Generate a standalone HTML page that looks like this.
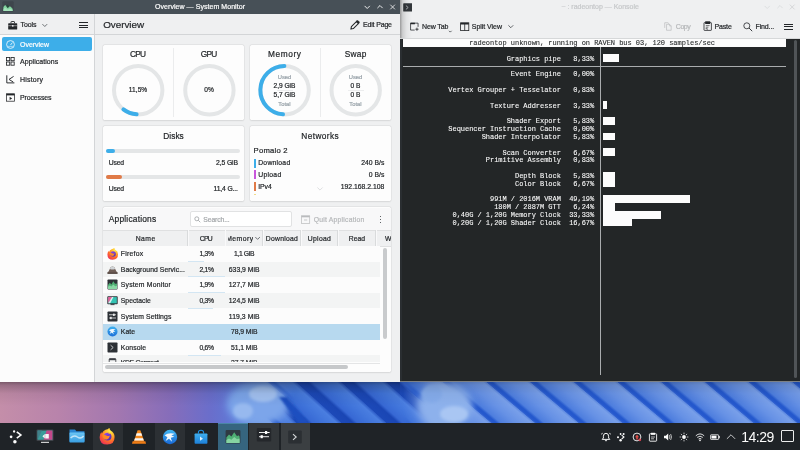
<!DOCTYPE html>
<html><head><meta charset="utf-8"><title>desktop</title>
<style>
html,body{margin:0;padding:0}
body{width:800px;height:450px;overflow:hidden;position:relative;background:#3f66c9;font-family:"Liberation Sans",sans-serif;}
.a{position:absolute;display:block}
.t{position:absolute;white-space:pre;font-family:"Liberation Sans",sans-serif;-webkit-text-stroke:0.2px}
.m{position:absolute;white-space:pre;font-family:"Liberation Mono",monospace;-webkit-text-stroke:0.08px}
#root{position:absolute;left:0;top:0;width:800px;height:450px;overflow:hidden;will-change:transform}
</style></head><body><div id="root">
<svg class="a" style="left:0;top:375px" width="800" height="55" viewBox="0 375 800 55"><defs>
<linearGradient id="wpL" x1="0" x2="270" y1="0" y2="0" gradientUnits="userSpaceOnUse">
 <stop offset="0" stop-color="#c48ea9"/><stop offset="0.22" stop-color="#b883ab"/>
 <stop offset="0.44" stop-color="#a277b0"/><stop offset="0.63" stop-color="#866dba"/>
 <stop offset="0.78" stop-color="#6a6ecb"/><stop offset="0.88" stop-color="#5d7ad8"/><stop offset="1" stop-color="#5d80dc" stop-opacity="0"/>
</linearGradient>
<linearGradient id="wpS" x1="0" x2="1" y1="0" y2="0">
 <stop offset="0" stop-color="#3565d2"/><stop offset="0.06" stop-color="#2458cd"/><stop offset="0.13" stop-color="#2458cd"/>
 <stop offset="0.22" stop-color="#4e7ede"/><stop offset="0.55" stop-color="#6691e5"/>
 <stop offset="0.92" stop-color="#789fe9"/><stop offset="1" stop-color="#5c88e0"/>
</linearGradient>
<pattern id="stripes" width="43.7" height="60" patternUnits="userSpaceOnUse" patternTransform="translate(530,382) skewX(49.9)">
 <rect x="0" y="0" width="43.7" height="60" fill="url(#wpS)"/>
</pattern>
<linearGradient id="dk" x1="270" x2="430" y1="0" y2="0" gradientUnits="userSpaceOnUse">
 <stop offset="0" stop-color="#0c36b4" stop-opacity="0"/><stop offset="0.2" stop-color="#0c36b4" stop-opacity="0.42"/>
 <stop offset="0.8" stop-color="#0c36b4" stop-opacity="0.42"/><stop offset="1" stop-color="#0c36b4" stop-opacity="0"/>
</linearGradient>
<linearGradient id="shade" x1="0" x2="0" y1="381" y2="423" gradientUnits="userSpaceOnUse">
 <stop offset="0" stop-color="#000" stop-opacity="0.42"/><stop offset="0.1" stop-color="#000" stop-opacity="0.22"/><stop offset="0.3" stop-color="#000" stop-opacity="0.06"/><stop offset="0.6" stop-color="#000" stop-opacity="0"/>
</linearGradient>
<linearGradient id="wpS2" x1="0" x2="1" y1="0" y2="0">
 <stop offset="0" stop-color="#1c49b8"/><stop offset="0.26" stop-color="#1a46b4"/>
 <stop offset="0.36" stop-color="#3768d4"/><stop offset="0.6" stop-color="#3f73da"/>
 <stop offset="0.9" stop-color="#4a7ee0"/><stop offset="1" stop-color="#2c5ac6"/>
</linearGradient>
<pattern id="stripes2" width="45" height="60" patternUnits="userSpaceOnUse" patternTransform="translate(296,382) skewX(48)">
 <rect x="0" y="0" width="45" height="60" fill="url(#wpS2)"/>
</pattern>
<linearGradient id="mkg" x1="280" x2="430" y1="0" y2="0" gradientUnits="userSpaceOnUse">
 <stop offset="0" stop-color="#000"/><stop offset="0.1" stop-color="#fff"/><stop offset="0.82" stop-color="#fff"/><stop offset="1" stop-color="#000"/>
</linearGradient>
<mask id="mk" maskUnits="userSpaceOnUse" x="280" y="375" width="150" height="55"><rect x="280" y="375" width="150" height="55" fill="url(#mkg)"/></mask>
<filter id="blur1" x="-50%" y="-50%" width="200%" height="200%"><feGaussianBlur stdDeviation="0.9"/></filter>
<filter id="blur4" x="-50%" y="-50%" width="200%" height="200%"><feGaussianBlur stdDeviation="3.5"/></filter>
<filter id="blur2" x="-50%" y="-50%" width="200%" height="200%"><feGaussianBlur stdDeviation="1.8"/></filter>
</defs><rect x="0" y="375" width="800" height="55" fill="url(#stripes)"/><rect x="280" y="375" width="150" height="55" fill="url(#stripes2)" mask="url(#mk)"/><rect x="0" y="375" width="270" height="55" fill="url(#wpL)"/><g filter="url(#blur4)"><ellipse cx="257" cy="404" rx="30" ry="22" fill="#7ba5ea"/><ellipse cx="445" cy="406" rx="27" ry="24" fill="#8db1ec"/></g><g filter="url(#blur2)"><ellipse cx="263" cy="394" rx="14" ry="8" fill="#a3c2f2"/><ellipse cx="243" cy="411" rx="10" ry="8" fill="#97b9ef"/><ellipse cx="454" cy="414" rx="14" ry="8" fill="#a9c6f3"/><ellipse cx="432" cy="394" rx="10" ry="9" fill="#84abea"/></g><path d="M279 397L287 397L309 423L299 423Z" fill="#1f4fc0" filter="url(#blur1)"/><rect x="0" y="381" width="400" height="42" fill="url(#shade)"/><rect x="400" y="381" width="400" height="42" fill="url(#shade)" opacity="0.55"/></svg>
<div class="a" style="left:0px;top:0px;width:400px;height:381.5px;background:#eff0f1;"></div>
<div class="a" style="left:400px;top:0px;width:400px;height:381.5px;background:#232627;"></div>
<div class="a" style="left:0px;top:423px;width:800px;height:27px;background:#1f2327;"></div>
<div class="a" style="left:0px;top:0px;width:400px;height:13.5px;background:#475057;"></div>
<span class="t" style="left:155.00px;top:2.00px;font-size:7.0px;line-height:9px;color:#fcfcfc;letter-spacing:0.055px;">Overview — System Monitor</span>
<svg class="a" style="left:1.5px;top:1.2px;" width="12" height="11" viewBox="0 0 12 11"><rect x="0.3" y="0.3" width="11.4" height="10.4" rx="1.2" fill="#3e454c"/><path d="M1.4 10.1V6L3.1 3.9L4.6 5.4L5.7 6.9L7.9 5.2L9.2 6.2L10.6 7.7V10.1Z" fill="#7fd29d"/><path d="M1.4 10.1V8L3.1 6.6L5.7 8.6L7.9 7.4L10.6 8.8V10.1Z" fill="#a4e3ba"/><path d="M4.4 5.2L5.7 3.2L7 5.6L5.7 6.9Z" fill="#1f4a33" opacity="0.8"/></svg>
<svg class="a" style="left:360px;top:0px;" width="40" height="14" viewBox="0 0 40 14"><path d="M4.6 5.9L7.2 8.5L9.8 5.9" fill="none" stroke="#fcfcfc" stroke-width="0.9"/><path d="M17.4 8.1L20 5.5L22.6 8.1" fill="none" stroke="#fcfcfc" stroke-width="0.9"/><path d="M30.3 4.7L34.9 9.3M34.9 4.7L30.3 9.3" stroke="#eeeff0" stroke-width="0.85" fill="none"/></svg>
<div class="a" style="left:0px;top:13.5px;width:94px;height:368px;background:#fcfcfc;"></div>
<div class="a" style="left:0px;top:13.5px;width:94px;height:21px;background:#eff0f1;"></div>
<div class="a" style="left:0px;top:34.3px;width:400px;height:0.6px;background:#d3d5d7;"></div>
<div class="a" style="left:94px;top:13.5px;width:0.6px;height:368px;background:#d3d5d7;"></div>
<div class="a" style="left:94.6px;top:13.5px;width:305.4px;height:20.8px;background:#eff0f1;"></div>
<svg class="a" style="left:8px;top:20.5px;" width="9.5" height="9" viewBox="0 0 9.5 9"><path d="M3 2.2V1.1Q3 0.5 3.6 0.5H5.9Q6.5 0.5 6.5 1.1V2.2" fill="none" stroke="#232629" stroke-width="0.9"/><rect x="0.2" y="2.2" width="9" height="6.4" rx="0.6" fill="#232629"/><rect x="0.2" y="4.6" width="9" height="0.5" fill="#eff0f1"/><rect x="4" y="4.1" width="1.5" height="1.5" fill="#eff0f1"/></svg>
<span class="t" style="left:20.60px;top:20.00px;font-size:7.0px;line-height:9px;color:#232629;letter-spacing:-0.085px;">Tools</span>
<svg class="a" style="left:40px;top:22px;" width="10" height="7" viewBox="0 0 10 7"><path d="M2.4 2.0999999999999996L4.8 4.5L7.199999999999999 2.0999999999999996" fill="none" stroke="#4d5357" stroke-width="0.8"/></svg>
<div class="a" style="left:79px;top:21.9px;width:8.8px;height:1.1px;background:#232629;"></div>
<div class="a" style="left:79px;top:24.5px;width:8.8px;height:1.1px;background:#232629;"></div>
<div class="a" style="left:79px;top:27.1px;width:8.8px;height:1.1px;background:#232629;"></div>
<span class="t" style="left:103.20px;top:18.00px;font-size:9.9px;line-height:13px;color:#232629;letter-spacing:-0.037px;">Overview</span>
<svg class="a" style="left:349.6px;top:20.4px;" width="10" height="10" viewBox="0 0 10 10"><path d="M0.9 9.1L1.4 6.7L6.4 1.7L8.3 3.6L3.3 8.6Z" fill="#f6f6f6" stroke="#232629" stroke-width="1.05" stroke-linejoin="round"/><path d="M6 1.3L7 0.5Q7.6 0.2 8.2 0.8L9.2 1.8Q9.7 2.4 9.2 3L8.6 3.8Z" fill="#232629" stroke="#232629" stroke-width="0.5"/></svg>
<span class="t" style="left:363.00px;top:20.00px;font-size:7.0px;line-height:9px;color:#232629;letter-spacing:-0.169px;">Edit Page</span>
<div class="a" style="left:2px;top:37px;width:90px;height:14px;background:#3daee9;border-radius:2px"></div>
<span class="t" style="left:20.00px;top:40.00px;font-size:7.0px;line-height:9px;color:#fcfcfc;letter-spacing:-0.025px;">Overview</span>
<span class="t" style="left:20.00px;top:57.00px;font-size:7.0px;line-height:9px;color:#232629;letter-spacing:0.041px;">Applications</span>
<span class="t" style="left:20.00px;top:75.00px;font-size:7.0px;line-height:9px;color:#232629;letter-spacing:0.203px;">History</span>
<span class="t" style="left:20.00px;top:93.00px;font-size:7.0px;line-height:9px;color:#232629;letter-spacing:-0.148px;">Processes</span>
<svg class="a" style="left:6px;top:39.9px;" width="9" height="9" viewBox="0 0 9 9"><circle cx="4.5" cy="4.5" r="3.9" fill="none" stroke="#fcfcfc" stroke-width="0.8"/><path d="M4.5 5L6.4 2.6" stroke="#fcfcfc" stroke-width="0.8"/><path d="M2 6.4H7" stroke="#fcfcfc" stroke-width="0.5"/></svg>
<svg class="a" style="left:5.9px;top:57.2px;" width="9" height="9" viewBox="0 0 9 9"><g fill="none" stroke="#232629" stroke-width="0.85"><rect x="0.5" y="0.5" width="3.2" height="3.2"/><rect x="5" y="0.5" width="3.2" height="3.2"/><rect x="0.5" y="5" width="3.2" height="3.2"/><rect x="5" y="5" width="3.2" height="3.2"/></g></svg>
<svg class="a" style="left:5.9px;top:75.2px;" width="9" height="9" viewBox="0 0 9 9"><g fill="none" stroke="#232629" stroke-width="0.95"><path d="M0.8 0.3V7.9H8.4"/><path d="M7.6 1.4L3 4.4L7.2 7"/></g></svg>
<svg class="a" style="left:5.9px;top:93.2px;" width="9" height="9" viewBox="0 0 9 9"><rect x="0.5" y="0.8" width="8" height="7.4" fill="none" stroke="#232629" stroke-width="0.75"/><rect x="0.5" y="0.8" width="8" height="1.6" fill="#232629"/><path d="M3.6 3.8V7L6.2 5.4Z" fill="#232629"/></svg>
<div class="a" style="left:102.7px;top:44.6px;width:141.1px;height:75.2px;background:#fdfdfd;border-radius:1.5px;box-shadow:0 0 1.2px rgba(0,0,0,0.22),0 0.6px 2px rgba(0,0,0,0.07);"></div>
<div class="a" style="left:249.9px;top:44.6px;width:141.1px;height:75.2px;background:#fdfdfd;border-radius:1.5px;box-shadow:0 0 1.2px rgba(0,0,0,0.22),0 0.6px 2px rgba(0,0,0,0.07);"></div>
<div class="a" style="left:102.7px;top:126px;width:141.1px;height:75px;background:#fdfdfd;border-radius:1.5px;box-shadow:0 0 1.2px rgba(0,0,0,0.22),0 0.6px 2px rgba(0,0,0,0.07);"></div>
<div class="a" style="left:249.9px;top:126px;width:141.1px;height:75px;background:#fdfdfd;border-radius:1.5px;box-shadow:0 0 1.2px rgba(0,0,0,0.22),0 0.6px 2px rgba(0,0,0,0.07);"></div>
<div class="a" style="left:102.7px;top:207px;width:288.3px;height:164.6px;background:#fdfdfd;border-radius:1.5px;box-shadow:0 0 1.2px rgba(0,0,0,0.22),0 0.6px 2px rgba(0,0,0,0.07);"></div>
<div class="a" style="left:173px;top:48px;width:0.5px;height:69px;background:#ebeced;"></div>
<div class="a" style="left:320px;top:48px;width:0.5px;height:69px;background:#ebeced;"></div>
<svg class="a" style="left:102.5px;top:45px;" width="289" height="75" viewBox="102.5 45 289 75"><circle cx="137.7" cy="90.2" r="24.2" fill="none" stroke="#e4e6e7" stroke-width="4.0"/><path d="M136.10 114.35A24.2 24.2 0 0 1 122.93 109.37" fill="none" stroke="#3daee9" stroke-width="4.0" stroke-linecap="round"/><circle cx="208.9" cy="90.2" r="24.2" fill="none" stroke="#e4e6e7" stroke-width="4.0"/><circle cx="284.1" cy="90.2" r="24.2" fill="none" stroke="#e4e6e7" stroke-width="4.0"/><path d="M282.50 114.35A24.2 24.2 0 0 1 283.87 66.00" fill="none" stroke="#3daee9" stroke-width="4.0" stroke-linecap="round"/><circle cx="355.2" cy="90.2" r="24.2" fill="none" stroke="#e4e6e7" stroke-width="4.0"/></svg>
<span class="t" style="left:130.00px;top:49.00px;font-size:8.3px;line-height:11px;color:#232629;letter-spacing:-0.762px;">CPU</span>
<span class="t" style="left:200.75px;top:49.00px;font-size:8.3px;line-height:11px;color:#232629;letter-spacing:-0.743px;">GPU</span>
<span class="t" style="left:268.00px;top:49.00px;font-size:8.3px;line-height:11px;color:#232629;letter-spacing:0.605px;">Memory</span>
<span class="t" style="left:344.75px;top:49.00px;font-size:8.3px;line-height:11px;color:#232629;letter-spacing:0.246px;">Swap</span>
<span class="t" style="left:128.75px;top:85.00px;font-size:6.6px;line-height:9px;color:#232629;letter-spacing:0.069px;">11,5%</span>
<span class="t" style="left:204.25px;top:85.00px;font-size:6.6px;line-height:9px;color:#232629;letter-spacing:-0.039px;">0%</span>
<span class="t" style="left:277.73px;top:73.00px;font-size:5.8px;line-height:8px;color:#98a2a9;">Used</span>
<span class="t" style="left:273.49px;top:81.00px;font-size:6.6px;line-height:9px;color:#232629;">2,9 GiB</span>
<div class="a" style="left:276.5px;top:90.1px;width:16px;height:0.5px;background:#ecedee;"></div>
<span class="t" style="left:273.49px;top:90.00px;font-size:6.6px;line-height:9px;color:#232629;">5,7 GiB</span>
<span class="t" style="left:278.37px;top:100.00px;font-size:5.8px;line-height:8px;color:#98a2a9;">Total</span>
<span class="t" style="left:348.73px;top:73.00px;font-size:5.8px;line-height:8px;color:#98a2a9;">Used</span>
<span class="t" style="left:350.55px;top:81.00px;font-size:6.6px;line-height:9px;color:#232629;">0 B</span>
<div class="a" style="left:347.5px;top:90.1px;width:16px;height:0.5px;background:#ecedee;"></div>
<span class="t" style="left:350.55px;top:90.00px;font-size:6.6px;line-height:9px;color:#232629;">0 B</span>
<span class="t" style="left:349.37px;top:100.00px;font-size:5.8px;line-height:8px;color:#98a2a9;">Total</span>
<span class="t" style="left:163.25px;top:131.00px;font-size:8.3px;line-height:11px;color:#232629;letter-spacing:0.053px;">Disks</span>
<div class="a" style="left:106.3px;top:149.3px;width:134.2px;height:3.6px;background:#e4e6e7;border-radius:2px;"></div>
<div class="a" style="left:106.3px;top:149.3px;width:8.6px;height:3.6px;background:#3daee9;border-radius:2px;"></div>
<span class="t" style="left:108.80px;top:158.00px;font-size:6.8px;line-height:9px;color:#232629;letter-spacing:-0.192px;">Used</span>
<span class="t" style="left:216.00px;top:158.00px;font-size:6.8px;line-height:9px;color:#232629;letter-spacing:-0.113px;">2,5 GiB</span>
<div class="a" style="left:106.3px;top:175.4px;width:134.2px;height:3.6px;background:#e4e6e7;border-radius:2px;"></div>
<div class="a" style="left:106.3px;top:175.4px;width:16.2px;height:3.6px;background:#e07a47;border-radius:2px;"></div>
<span class="t" style="left:108.80px;top:184.00px;font-size:6.8px;line-height:9px;color:#232629;letter-spacing:-0.192px;">Used</span>
<span class="t" style="left:213.50px;top:184.00px;font-size:6.8px;line-height:9px;color:#232629;letter-spacing:-0.134px;">11,4 G...</span>
<span class="t" style="left:301.25px;top:131.00px;font-size:8.3px;line-height:11px;color:#232629;letter-spacing:0.416px;">Networks</span>
<span class="t" style="left:253.60px;top:146.00px;font-size:7.7px;line-height:10px;color:#232629;letter-spacing:0.210px;">Pomalo 2</span>
<div class="a" style="left:253.6px;top:158.79999999999998px;width:2px;height:8.8px;background:#3daee9;"></div>
<span class="t" style="left:258.20px;top:158.00px;font-size:6.8px;line-height:9px;color:#232629;letter-spacing:0.251px;">Download</span>
<span class="t" style="left:361.24px;top:158.00px;font-size:6.8px;line-height:9px;color:#232629;">240 B/s</span>
<div class="a" style="left:253.6px;top:170.4px;width:2px;height:8.8px;background:#c957dc;"></div>
<span class="t" style="left:258.20px;top:170.00px;font-size:6.8px;line-height:9px;color:#232629;letter-spacing:0.290px;">Upload</span>
<span class="t" style="left:368.80px;top:170.00px;font-size:6.8px;line-height:9px;color:#232629;">0 B/s</span>
<div class="a" style="left:253.6px;top:182.0px;width:2px;height:8.8px;background:#e07a47;"></div>
<span class="t" style="left:258.20px;top:182.00px;font-size:6.8px;line-height:9px;color:#232629;letter-spacing:-0.036px;">IPv4</span>
<span class="t" style="left:340.81px;top:182.00px;font-size:6.8px;line-height:9px;color:#232629;">192.168.2.108</span>
<div class="a" style="left:253.6px;top:193.7px;width:2px;height:0.7px;background:#f0dc8a;"></div>
<svg class="a" style="left:315px;top:185px;" width="10" height="8" viewBox="0 0 10 8"><path d="M2.4 2.5L5 5.1L7.6 2.5" fill="none" stroke="#d5d7d9" stroke-width="0.8"/></svg>
<div class="a" style="left:103px;top:207.5px;width:287.5px;height:22.3px;background:#f8f8f9;border-radius:1.5px 1.5px 0 0"></div>
<span class="t" style="left:108.80px;top:214.00px;font-size:8.4px;line-height:11px;color:#232629;letter-spacing:0.200px;">Applications</span>
<div class="a" style="left:189.8px;top:211.4px;width:102.6px;height:15.6px;background:#ffffff;border:0.5px solid #e1e2e3;border-radius:2px;box-sizing:border-box;"></div>
<svg class="a" style="left:193.5px;top:216px;" width="7" height="7" viewBox="0 0 7 7"><circle cx="2.8" cy="2.8" r="2" fill="none" stroke="#8f9396" stroke-width="0.7"/><path d="M4.3 4.3L6.3 6.3" stroke="#8f9396" stroke-width="0.7"/></svg>
<span class="t" style="left:203.30px;top:215.00px;font-size:6.8px;line-height:9px;color:#a5a8ab;letter-spacing:-0.114px;">Search...</span>
<svg class="a" style="left:301px;top:214.6px;" width="9.5" height="9.5" viewBox="0 0 9.5 9.5"><rect x="0.5" y="0.8" width="8.2" height="7.8" fill="none" stroke="#b9bbbd" stroke-width="0.7"/><rect x="0.5" y="0.8" width="8.2" height="1.5" fill="#b9bbbd"/><rect x="3" y="4.6" width="3.2" height="0.8" fill="#b9bbbd"/></svg>
<span class="t" style="left:313.80px;top:215.00px;font-size:6.8px;line-height:9px;color:#b6b8ba;letter-spacing:0.216px;">Quit Application</span>
<div class="a" style="left:379.5px;top:216.1px;width:1.35px;height:1.35px;background:#2e3236;border-radius:1px"></div>
<div class="a" style="left:379.5px;top:218.8px;width:1.35px;height:1.35px;background:#2e3236;border-radius:1px"></div>
<div class="a" style="left:379.5px;top:221.5px;width:1.35px;height:1.35px;background:#2e3236;border-radius:1px"></div>
<div class="a" style="left:103px;top:230px;width:287.5px;height:15.8px;background:#eff0f1;"></div>
<div class="a" style="left:103px;top:229.8px;width:287.5px;height:0.5px;background:#dfe0e1;"></div>
<div class="a" style="left:103px;top:245.6px;width:287.5px;height:0.5px;background:#dfe0e1;"></div>
<div class="a" style="left:187.3px;top:230.3px;width:0.5px;height:15.3px;background:#d9dbdc;"></div>
<div class="a" style="left:187.8px;top:230.3px;width:0.5px;height:15.3px;background:#f9f9fa;"></div>
<div class="a" style="left:224.5px;top:230.3px;width:0.5px;height:15.3px;background:#d9dbdc;"></div>
<div class="a" style="left:225.0px;top:230.3px;width:0.5px;height:15.3px;background:#f9f9fa;"></div>
<div class="a" style="left:262.2px;top:230.3px;width:0.5px;height:15.3px;background:#d9dbdc;"></div>
<div class="a" style="left:262.7px;top:230.3px;width:0.5px;height:15.3px;background:#f9f9fa;"></div>
<div class="a" style="left:300.0px;top:230.3px;width:0.5px;height:15.3px;background:#d9dbdc;"></div>
<div class="a" style="left:300.5px;top:230.3px;width:0.5px;height:15.3px;background:#f9f9fa;"></div>
<div class="a" style="left:337.3px;top:230.3px;width:0.5px;height:15.3px;background:#d9dbdc;"></div>
<div class="a" style="left:337.8px;top:230.3px;width:0.5px;height:15.3px;background:#f9f9fa;"></div>
<div class="a" style="left:375.1px;top:230.3px;width:0.5px;height:15.3px;background:#d9dbdc;"></div>
<div class="a" style="left:375.6px;top:230.3px;width:0.5px;height:15.3px;background:#f9f9fa;"></div>
<span class="t" style="left:135.75px;top:234.00px;font-size:6.8px;line-height:9px;color:#232629;letter-spacing:0.453px;">Name</span>
<span class="t" style="left:199.70px;top:234.00px;font-size:6.8px;line-height:9px;color:#232629;letter-spacing:-0.679px;">CPU</span>
<span class="t" style="left:265.80px;top:234.00px;font-size:6.8px;line-height:9px;color:#232629;letter-spacing:0.251px;">Download</span>
<span class="t" style="left:307.70px;top:234.00px;font-size:6.8px;line-height:9px;color:#232629;letter-spacing:0.330px;">Upload</span>
<span class="t" style="left:348.85px;top:234.00px;font-size:6.8px;line-height:9px;color:#232629;letter-spacing:0.014px;">Read</span>
<div class="a" style="left:228.2px;top:231px;width:25.3px;height:14px;overflow:hidden"><span class="t" style="right:-0.2px;top:3px;font-size:6.8px;line-height:9px;color:#232629;letter-spacing:0.5px">Memory</span></div>
<svg class="a" style="left:253.5px;top:235px;" width="8" height="7" viewBox="0 0 8 7"><path d="M1.3000000000000003 2.0500000000000003L3.6 4.35L5.9 2.0500000000000003" fill="none" stroke="#3a3e42" stroke-width="0.7"/></svg>
<div class="a" style="left:376.5px;top:231px;width:14px;height:14px;overflow:hidden"><span class="t" style="left:8.4px;top:3px;font-size:6.8px;line-height:9px;color:#232629">Written</span></div>
<div class="a" style="left:103px;top:245.9px;width:276.5px;height:116.6px;overflow:hidden;background:#fcfcfc">
<div class="a" style="left:0;top:0.00px;width:276.5px;height:15.62px;background:#fcfcfc"></div>
<span class="t" style="left:17.80px;top:3.00px;font-size:6.8px;line-height:9px;color:#232629;letter-spacing:0.253px;">Firefox</span>
<span class="t" style="left:96.55px;top:3.00px;font-size:6.8px;line-height:9px;color:#232629;letter-spacing:-0.333px;">1,3%</span>
<span class="t" style="left:130.95px;top:3.00px;font-size:6.8px;line-height:9px;color:#232629;letter-spacing:-0.363px;">1,1 GiB</span>
<div class="a" style="left:0;top:15.62px;width:276.5px;height:15.62px;background:#f3f4f4"></div>
<span class="t" style="left:17.80px;top:19.00px;font-size:6.8px;line-height:9px;color:#232629;letter-spacing:0.077px;">Background Servic...</span>
<span class="t" style="left:96.55px;top:19.00px;font-size:6.8px;line-height:9px;color:#232629;letter-spacing:-0.333px;">2,1%</span>
<span class="t" style="left:125.80px;top:19.00px;font-size:6.8px;line-height:9px;color:#232629;letter-spacing:0.023px;">633,9 MiB</span>
<div class="a" style="left:0;top:31.24px;width:276.5px;height:15.62px;background:#fcfcfc"></div>
<span class="t" style="left:17.80px;top:34.00px;font-size:6.8px;line-height:9px;color:#232629;letter-spacing:0.213px;">System Monitor</span>
<span class="t" style="left:96.55px;top:34.00px;font-size:6.8px;line-height:9px;color:#232629;letter-spacing:-0.333px;">1,9%</span>
<span class="t" style="left:125.80px;top:34.00px;font-size:6.8px;line-height:9px;color:#232629;letter-spacing:0.023px;">127,7 MiB</span>
<div class="a" style="left:0;top:46.86px;width:276.5px;height:15.62px;background:#f3f4f4"></div>
<span class="t" style="left:17.80px;top:50.00px;font-size:6.8px;line-height:9px;color:#232629;letter-spacing:0.017px;">Spectacle</span>
<span class="t" style="left:96.55px;top:50.00px;font-size:6.8px;line-height:9px;color:#232629;letter-spacing:-0.333px;">0,3%</span>
<span class="t" style="left:125.80px;top:50.00px;font-size:6.8px;line-height:9px;color:#232629;letter-spacing:0.023px;">124,5 MiB</span>
<div class="a" style="left:0;top:62.48px;width:276.5px;height:15.62px;background:#fcfcfc"></div>
<span class="t" style="left:17.80px;top:66.00px;font-size:6.8px;line-height:9px;color:#232629;letter-spacing:0.098px;">System Settings</span>
<span class="t" style="left:125.80px;top:66.00px;font-size:6.8px;line-height:9px;color:#232629;letter-spacing:0.086px;">119,3 MiB</span>
<div class="a" style="left:0;top:78.10px;width:276.5px;height:15.62px;background:#b7d9ef"></div>
<span class="t" style="left:17.80px;top:81.00px;font-size:6.8px;line-height:9px;color:#232629;letter-spacing:0.104px;">Kate</span>
<span class="t" style="left:127.95px;top:81.00px;font-size:6.8px;line-height:9px;color:#232629;letter-spacing:-0.048px;">78,9 MiB</span>
<div class="a" style="left:0;top:93.72px;width:276.5px;height:15.62px;background:#fcfcfc"></div>
<span class="t" style="left:17.80px;top:97.00px;font-size:6.8px;line-height:9px;color:#232629;letter-spacing:0.104px;">Konsole</span>
<span class="t" style="left:96.55px;top:97.00px;font-size:6.8px;line-height:9px;color:#232629;letter-spacing:-0.333px;">0,6%</span>
<span class="t" style="left:127.95px;top:97.00px;font-size:6.8px;line-height:9px;color:#232629;letter-spacing:-0.048px;">51,1 MiB</span>
<div class="a" style="left:0;top:109.34px;width:276.5px;height:15.62px;background:#f3f4f4"></div>
<span class="t" style="left:17.80px;top:112.00px;font-size:6.8px;line-height:9px;color:#232629;letter-spacing:-0.320px;">KDE Connect</span>
<span class="t" style="left:127.95px;top:112.00px;font-size:6.8px;line-height:9px;color:#232629;letter-spacing:-0.048px;">37,7 MiB</span>
<div class="a" style="left:85px;top:14.92px;width:16px;height:0.6px;background:#d3e6f3"></div>
<div class="a" style="left:85px;top:30.54px;width:37px;height:0.6px;background:#d3e6f3"></div>
<div class="a" style="left:85px;top:46.16px;width:37px;height:0.6px;background:#d3e6f3"></div>
<div class="a" style="left:85px;top:61.78px;width:25px;height:0.6px;background:#d3e6f3"></div>
<div class="a" style="left:85px;top:108.64px;width:33px;height:0.6px;background:#d3e6f3"></div>
<svg class="a" style="left:3.6px;top:1.61px" width="12" height="12" viewBox="0 0 17 17"><defs><radialGradient id="ffg" cx="0.7" cy="0.2" r="1"><stop offset="0" stop-color="#fff04a"/><stop offset="0.3" stop-color="#ffb52a"/><stop offset="0.6" stop-color="#ff6a2a"/><stop offset="1" stop-color="#e31b6a"/></radialGradient><linearGradient id="ffh" x1="0" x2="1" y1="0" y2="1"><stop offset="0" stop-color="#9a4bf0"/><stop offset="1" stop-color="#4a2ba8"/></linearGradient></defs><path d="M8.6 1.2Q9.4 0.2 10.6 0Q10.4 1.4 11.6 2.4Q15.6 4.4 15.6 9Q15.6 16.6 8.2 16.6Q0.6 16.6 0.6 9.2Q0.6 6 2.4 4Q2.4 5 3 5.6Q3.6 3 6 2Q7.4 1.4 8.6 1.2Z" fill="url(#ffg)"/><circle cx="8.6" cy="8.6" r="3.9" fill="url(#ffh)"/><path d="M3.4 7.2Q5.4 6 7.2 7.4Q9 8.6 10.8 7.4Q10.4 10.8 7.6 11.4Q4.4 11.6 3.4 7.2Z" fill="#ff8a22"/></svg>
<svg class="a" style="left:4px;top:17.93px" width="11" height="11" viewBox="0 0 11 11"><path d="M0.5 8.6Q0.5 7.6 1.6 7.4L3.6 3.2Q5.5 1.6 7.4 3.2L9.4 7.4Q10.5 7.6 10.5 8.6V9.6H0.5Z" fill="#6e5d55"/><path d="M3.6 3.2Q5.5 1.6 7.4 3.2L8.2 4.9Q5.5 6 2.8 4.9Z" fill="#cfd3d6"/><rect x="0.5" y="8.6" width="10" height="1.2" fill="#4d403a"/></svg>
<svg class="a" style="left:4px;top:33.55px" width="11" height="11" viewBox="0 0 11 11"><rect x="0.5" y="0.5" width="10" height="10" rx="0.8" fill="#2d3136"/><path d="M1 10V6L2.8 3.8L4.4 5.4L6.3 2.2L8.2 5L9.2 4.3L10 5.2V10Z" fill="#4fae74"/><path d="M1 10V7.8L2.8 6.6L4.4 7.6L6.3 5.6L8.2 7.2L10 6.8V10Z" fill="#8ad7a5"/></svg>
<svg class="a" style="left:4px;top:49.17px" width="11" height="11" viewBox="0 0 11 11"><rect x="0.3" y="1.2" width="10.4" height="8" rx="0.8" fill="#2f3338"/><rect x="1.2" y="2.1" width="8.6" height="6.2" fill="#34c3b3"/><path d="M1.2 8.3L5 2.1H1.2Z" fill="#e95e9a"/><path d="M1.2 8.3L5 2.1H6.5L3.2 8.3Z" fill="#f8f8f8" opacity="0.85"/><rect x="3.5" y="9.2" width="4" height="0.9" fill="#2f3338"/></svg>
<svg class="a" style="left:4px;top:64.79px" width="11" height="11" viewBox="0 0 11 11"><rect x="0.5" y="0.5" width="10" height="10" rx="0.8" fill="#2d3136"/><rect x="2" y="3.4" width="7" height="0.8" fill="#e8e9ea"/><rect x="2" y="6.6" width="7" height="0.8" fill="#e8e9ea"/><rect x="6.2" y="2.6" width="1.4" height="2.4" fill="#fff"/><rect x="3.2" y="5.8" width="1.4" height="2.4" fill="#fff"/></svg>
<svg class="a" style="left:4px;top:80.41px" width="11" height="11" viewBox="0 0 11 11"><defs><linearGradient id="kt" x1="0" x2="0" y1="0" y2="1"><stop offset="0" stop-color="#3fb3f0"/><stop offset="1" stop-color="#1b6fd8"/></linearGradient></defs><circle cx="5.5" cy="5.5" r="5" fill="url(#kt)"/><path d="M2 4.3Q4.6 2.4 8.6 3.4L6.4 4.6L8.4 5.4L6 6L6.8 8.6L4.8 6.6L2.6 8L3.8 5.6Z" fill="#f2f8fd"/></svg>
<svg class="a" style="left:4px;top:96.03px" width="11" height="11" viewBox="0 0 11 11"><rect x="0.5" y="0.5" width="10" height="10" rx="0.8" fill="#2d3136"/><path d="M3.6 3.2L6.2 5.5L3.6 7.8" fill="none" stroke="#d5d7d9" stroke-width="0.9"/></svg>
<svg class="a" style="left:4px;top:111.65px" width="11" height="11" viewBox="0 0 11 11"><rect x="2.2" y="0.6" width="6.6" height="9.8" rx="0.8" fill="none" stroke="#3a3e42" stroke-width="0.8"/><rect x="2.2" y="0.6" width="6.6" height="1.6" fill="#3a3e42"/></svg>
</div>
<div class="a" style="left:383.3px;top:247.5px;width:4.2px;height:91.2px;background:#c9cbcd;border-radius:2px"></div>
<div class="a" style="left:104.5px;top:365.3px;width:243.8px;height:3.6px;background:#c6c8ca;border-radius:2px"></div>
<div class="a" style="left:103px;top:362.5px;width:276.5px;height:0.5px;background:#e4e5e6;"></div>
<div class="a" style="left:400px;top:0px;width:400px;height:38.3px;background:#eff0f1;"></div>
<div class="a" style="left:400px;top:38.0px;width:400px;height:0.5px;background:#d6d8d9;"></div>
<svg class="a" style="left:402.6px;top:2.6px;" width="9.6" height="9" viewBox="0 0 9.6 9"><rect x="0.2" y="0.2" width="9" height="8.4" rx="0.7" fill="#33373b"/><path d="M2.9 2.6L5.2 4.5L2.9 6.4" fill="none" stroke="#c5c8ca" stroke-width="0.8"/></svg>
<span class="t" style="left:561.45px;top:2.00px;font-size:7.0px;line-height:9px;color:#c6c8ca;letter-spacing:-0.006px;">~ : radeontop — Konsole</span>
<svg class="a" style="left:760px;top:0px;" width="40" height="14" viewBox="0 0 40 14"><path d="M4.6 5.9L7.2 8.5L9.8 5.9" fill="none" stroke="#d9dbdc" stroke-width="0.9"/><path d="M17.4 8.1L20 5.5L22.6 8.1" fill="none" stroke="#d9dbdc" stroke-width="0.9"/><path d="M29.8 4.6L34.6 9.4M34.6 4.6L29.8 9.4" stroke="#d2d4d6" stroke-width="0.9" fill="none"/></svg>
<svg class="a" style="left:410px;top:21.7px;" width="9.4" height="9.4" viewBox="0 0 10 10"><path d="M0.6 8.6V1.2H8.6V5.2" fill="none" stroke="#232629" stroke-width="0.8"/><rect x="0.6" y="0.8" width="4.6" height="1.6" fill="#232629"/><path d="M0.6 8.6H5" stroke="#232629" stroke-width="0.8"/><path d="M7.4 6V9.4M5.7 7.7H9.1" stroke="#232629" stroke-width="0.85"/></svg>
<span class="t" style="left:422.00px;top:22.00px;font-size:7.0px;line-height:9px;color:#232629;letter-spacing:-0.135px;">New Tab</span>
<svg class="a" style="left:447.9px;top:30.3px;" width="5" height="4" viewBox="0 0 5 4"><path d="M1 0.8L2.3 2.1L3.6 0.8" fill="none" stroke="#232629" stroke-width="0.7"/></svg>
<svg class="a" style="left:459.8px;top:21.8px;" width="10" height="10" viewBox="0 0 10 10"><rect x="0.6" y="0.8" width="8.2" height="7.8" fill="none" stroke="#232629" stroke-width="0.8"/><rect x="0.6" y="0.8" width="8.2" height="1.7" fill="#232629"/><path d="M4.7 2V8.6" stroke="#232629" stroke-width="0.8"/></svg>
<span class="t" style="left:471.80px;top:22.00px;font-size:7.0px;line-height:9px;color:#232629;letter-spacing:-0.045px;">Split View</span>
<svg class="a" style="left:506px;top:23px;" width="10" height="7" viewBox="0 0 10 7"><path d="M2.4 2.3L4.8 4.7L7.199999999999999 2.3" fill="none" stroke="#3a3e42" stroke-width="0.8"/></svg>
<svg class="a" style="left:663.7px;top:21.9px;" width="9" height="9" viewBox="0 0 10 10"><path d="M0.8 6.6V0.8H4.4L5.8 2.2" fill="none" stroke="#b5b7b9" stroke-width="0.7"/><path d="M2.8 9.2V2.6H6.2L8 4.4V9.2Z" fill="none" stroke="#b5b7b9" stroke-width="0.7"/><path d="M6.2 2.6V4.4H8" fill="none" stroke="#b5b7b9" stroke-width="0.6"/></svg>
<span class="t" style="left:675.80px;top:22.00px;font-size:7.0px;line-height:9px;color:#b5b7b9;letter-spacing:-0.447px;">Copy</span>
<svg class="a" style="left:702.8px;top:21.4px;" width="10" height="10" viewBox="0 0 10 10"><rect x="1" y="1.6" width="7.4" height="7.8" rx="0.5" fill="none" stroke="#232629" stroke-width="0.8"/><rect x="2.2" y="0.3" width="5" height="2.7" fill="#232629"/><path d="M2.8 4.6H6.6M2.8 6.2H5.4" stroke="#232629" stroke-width="0.6"/><path d="M2.6 7.4H4.2V9" fill="none" stroke="#232629" stroke-width="0.6"/></svg>
<span class="t" style="left:714.50px;top:22.00px;font-size:7.0px;line-height:9px;color:#232629;letter-spacing:-0.150px;">Paste</span>
<svg class="a" style="left:742.8px;top:21.6px;" width="10" height="10" viewBox="0 0 10 10"><circle cx="3.8" cy="3.8" r="3" fill="none" stroke="#232629" stroke-width="0.8"/><path d="M6 6L9.2 9.2" stroke="#232629" stroke-width="0.9"/></svg>
<span class="t" style="left:755.50px;top:22.00px;font-size:7.0px;line-height:9px;color:#232629;letter-spacing:-0.125px;">Find...</span>
<div class="a" style="left:783.8px;top:23.5px;width:8.8px;height:1.1px;background:#232629;"></div>
<div class="a" style="left:783.8px;top:26.15px;width:8.8px;height:1.1px;background:#232629;"></div>
<div class="a" style="left:783.8px;top:28.8px;width:8.8px;height:1.1px;background:#232629;"></div>
<div class="a" style="left:400px;top:0px;width:12px;height:38.3px;background:linear-gradient(90deg,rgba(0,0,0,0.36),rgba(0,0,0,0.14) 22%,rgba(0,0,0,0.05) 55%,rgba(0,0,0,0));"></div>
<div class="a" style="left:400px;top:38.5px;width:2.2px;height:343px;background:#2a2e31;"></div>
<div class="a" style="left:402.5px;top:39.1px;width:383.33639999999997px;height:7.5px;background:#fcfcfc;"></div>
<span class="m" style="left:469.17px;top:39px;font-size:7px;line-height:9px;color:#232627;letter-spacing:-0.0333px;">radeontop unknown, running on RAVEN bus 03, 120 samples/sec</span>
<span class="m" style="left:402.50px;top:55px;font-size:7px;line-height:9px;color:#fcfcfc;letter-spacing:-0.0333px;">                         Graphics pipe   8,33%</span>
<div class="a" style="left:602.5016px;top:54.375px;width:16.6668px;height:7.9125px;background:#fcfcfc;"></div>
<span class="m" style="left:402.50px;top:70px;font-size:7px;line-height:9px;color:#fcfcfc;letter-spacing:-0.0333px;">                          Event Engine   0,00%</span>
<span class="m" style="left:402.50px;top:86px;font-size:7px;line-height:9px;color:#fcfcfc;letter-spacing:-0.0333px;">           Vertex Grouper + Tesselator   0,83%</span>
<span class="m" style="left:402.50px;top:102px;font-size:7px;line-height:9px;color:#fcfcfc;letter-spacing:-0.0333px;">                     Texture Addresser   3,33%</span>
<div class="a" style="left:602.5016px;top:101.25px;width:4.1667px;height:7.9125px;background:#fcfcfc;"></div>
<span class="m" style="left:402.50px;top:117px;font-size:7px;line-height:9px;color:#fcfcfc;letter-spacing:-0.0333px;">                         Shader Export   5,83%</span>
<div class="a" style="left:602.5016px;top:116.875px;width:12.5001px;height:7.9125px;background:#fcfcfc;"></div>
<span class="m" style="left:402.50px;top:125px;font-size:7px;line-height:9px;color:#fcfcfc;letter-spacing:-0.0333px;">           Sequencer Instruction Cache   0,00%</span>
<span class="m" style="left:402.50px;top:133px;font-size:7px;line-height:9px;color:#fcfcfc;letter-spacing:-0.0333px;">                   Shader Interpolator   5,83%</span>
<div class="a" style="left:602.5016px;top:132.5px;width:12.5001px;height:7.9125px;background:#fcfcfc;"></div>
<span class="m" style="left:402.50px;top:149px;font-size:7px;line-height:9px;color:#fcfcfc;letter-spacing:-0.0333px;">                        Scan Converter   6,67%</span>
<div class="a" style="left:602.5016px;top:148.125px;width:12.5001px;height:7.9125px;background:#fcfcfc;"></div>
<span class="m" style="left:402.50px;top:156px;font-size:7px;line-height:9px;color:#fcfcfc;letter-spacing:-0.0333px;">                    Primitive Assembly   0,83%</span>
<span class="m" style="left:402.50px;top:172px;font-size:7px;line-height:9px;color:#fcfcfc;letter-spacing:-0.0333px;">                           Depth Block   5,83%</span>
<div class="a" style="left:602.5016px;top:171.5625px;width:12.5001px;height:7.9125px;background:#fcfcfc;"></div>
<span class="m" style="left:402.50px;top:180px;font-size:7px;line-height:9px;color:#fcfcfc;letter-spacing:-0.0333px;">                           Color Block   6,67%</span>
<div class="a" style="left:602.5016px;top:179.375px;width:12.5001px;height:7.9125px;background:#fcfcfc;"></div>
<span class="m" style="left:402.50px;top:195px;font-size:7px;line-height:9px;color:#fcfcfc;letter-spacing:-0.0333px;">                     991M / 2016M VRAM  49,19%</span>
<div class="a" style="left:602.5016px;top:195.0px;width:87.5007px;height:7.9125px;background:#fcfcfc;"></div>
<span class="m" style="left:402.50px;top:203px;font-size:7px;line-height:9px;color:#fcfcfc;letter-spacing:-0.0333px;">                      180M / 2887M GTT   6,24%</span>
<div class="a" style="left:602.5016px;top:202.8125px;width:12.5001px;height:7.9125px;background:#fcfcfc;"></div>
<span class="m" style="left:402.50px;top:211px;font-size:7px;line-height:9px;color:#fcfcfc;letter-spacing:-0.0333px;">            0,40G / 1,20G Memory Clock  33,33%</span>
<div class="a" style="left:602.5016px;top:210.625px;width:58.3338px;height:7.9125px;background:#fcfcfc;"></div>
<span class="m" style="left:402.50px;top:219px;font-size:7px;line-height:9px;color:#fcfcfc;letter-spacing:-0.0333px;">            0,20G / 1,20G Shader Clock  16,67%</span>
<div class="a" style="left:602.5016px;top:218.4375px;width:29.1669px;height:7.9125px;background:#fcfcfc;"></div>
<div class="a" style="left:402.5px;top:65.74374999999999px;width:383.33639999999997px;height:0.8px;background:#a9acae;"></div>
<div class="a" style="left:599.9682499999999px;top:46.6125px;width:0.9px;height:328.125px;background:#a9acae;"></div>
<div class="a" style="left:786px;top:38.5px;width:14px;height:343px;background:#232627;"></div>
<div class="a" style="left:793.6px;top:40px;width:3.6px;height:338px;background:#505457;border-radius:2px"></div>
<div class="a" style="left:400px;top:381px;width:400px;height:0.8px;background:#7c8083;"></div>
<div class="a" style="left:92.5px;top:423px;width:30px;height:27px;background:#2c3034;"></div>
<div class="a" style="left:155px;top:423px;width:30px;height:27px;background:#2c3034;"></div>
<div class="a" style="left:217.5px;top:423px;width:30px;height:27px;background:#36657f;"></div>
<div class="a" style="left:217.5px;top:423px;width:30px;height:0.8px;background:#4a86a6;"></div>
<div class="a" style="left:248.8px;top:423px;width:30.7px;height:27px;background:#33373a;"></div>
<div class="a" style="left:280.5px;top:423px;width:29.7px;height:27px;background:#3b3f42;"></div>
<svg class="a" style="left:7.50px;top:428.60px" width="16" height="16" viewBox="0 0 16 16"><g fill="#fcfcfc"><circle cx="3.1" cy="7.8" r="1.35"/><circle cx="6.1" cy="2.5" r="1.15"/><circle cx="6.9" cy="12.8" r="1.75"/><path d="M9.3 2.2L14.2 6L9.3 9.8L8.3 8.6L11.7 6L8.3 3.4Z"/></g></svg>
<svg class="a" style="left:36.00px;top:428.20px" width="18" height="16" viewBox="0 0 18 16"><rect x="0.5" y="1.5" width="17" height="11.4" rx="1" fill="#40444a"/><rect x="1.6" y="2.6" width="14.8" height="9.2" fill="#3a9c9a"/><path d="M1.6 11.8L6 2.6H1.6Z" fill="#40808a"/><path d="M7.6 11.8L10.6 2.6H16.4V11.8Z" fill="#c4488a"/><path d="M6.4 8.2L8.8 6V10.6Z M9.2 6H12.8V10.6H9.2Z" fill="#f5f5f5"/><rect x="5" y="13.8" width="8" height="1.1" fill="#dfe1e2"/></svg>
<svg class="a" style="left:69.00px;top:428.40px" width="16" height="16" viewBox="0 0 16 16"><defs><linearGradient id="fold" x1="0" x2="0" y1="0" y2="1"><stop offset="0" stop-color="#6cc6f4"/><stop offset="1" stop-color="#3a9fe2"/></linearGradient></defs><path d="M0.5 1.6H6L7.4 3.2H15.5V13.6H0.5Z" fill="#2a86d2"/><rect x="0.5" y="4.4" width="15" height="10" rx="0.6" fill="url(#fold)"/><path d="M1.6 10Q5 6.6 8.4 9T14.6 8" fill="none" stroke="#d9effb" stroke-width="1.5" opacity="0.8"/></svg>
<svg class="a" style="left:99.30px;top:427.50px" width="17" height="17" viewBox="0 0 17 17"><defs><radialGradient id="ffp" cx="0.7" cy="0.2" r="1"><stop offset="0" stop-color="#fff04a"/><stop offset="0.3" stop-color="#ffb52a"/><stop offset="0.6" stop-color="#ff6a2a"/><stop offset="1" stop-color="#e31b6a"/></radialGradient><linearGradient id="ffg2" x1="0" x2="1" y1="0" y2="1"><stop offset="0" stop-color="#9a4bf0"/><stop offset="1" stop-color="#4a2ba8"/></linearGradient></defs><path d="M8.6 1.2Q9.4 0.2 10.6 0Q10.4 1.4 11.6 2.4Q15.6 4.4 15.6 9Q15.6 16.6 8.2 16.6Q0.6 16.6 0.6 9.2Q0.6 6 2.4 4Q2.4 5 3 5.6Q3.6 3 6 2Q7.4 1.4 8.6 1.2Z" fill="url(#ffp)"/><circle cx="8.6" cy="8.6" r="3.9" fill="url(#ffg2)"/><path d="M3.4 7.2Q5.4 6 7.2 7.4Q9 8.6 10.8 7.4Q10.4 10.8 7.6 11.4Q4.4 11.6 3.4 7.2Z" fill="#ff8a22"/><path d="M9 4.4Q11 4.2 12.2 6Q10.6 5.4 9.6 5.8Z" fill="#ffb52a"/></svg>
<svg class="a" style="left:130.80px;top:428.60px" width="16" height="16" viewBox="0 0 16 16"><path d="M6.6 1.2H9.4L13.2 12.4H2.8Z" fill="#f58a1f"/><path d="M5.7 4.2H10.3L11.2 6.8H4.8Z M4 9.2H12L12.8 11.6H3.2Z" fill="#f7f7f7"/><path d="M1.6 12.2H14.4L15 14.8H1Z" fill="#f07c14"/></svg>
<svg class="a" style="left:162.00px;top:428.60px" width="16" height="16" viewBox="0 0 16 16"><defs><linearGradient id="ktp" x1="0" x2="0" y1="0" y2="1"><stop offset="0" stop-color="#43b8f3"/><stop offset="1" stop-color="#1868d6"/></linearGradient></defs><circle cx="8" cy="8" r="7.2" fill="url(#ktp)"/><path d="M2.6 6.2Q6.6 3.2 12.8 4.8L9.4 6.6L12.4 7.8L8.8 8.8L10 12.8L7 9.8L3.6 12L5.4 8.2Z" fill="#f2f8fd"/></svg>
<svg class="a" style="left:193.20px;top:429.20px" width="16" height="16" viewBox="0 0 16 16"><defs><linearGradient id="disc" x1="0" x2="0" y1="0" y2="1"><stop offset="0" stop-color="#3fb0f0"/><stop offset="1" stop-color="#1d7fd8"/></linearGradient></defs><path d="M5.4 4.6V3.4Q5.4 1.2 8 1.2Q10.6 1.2 10.6 3.4V4.6" fill="none" stroke="#1d8fe0" stroke-width="1.1"/><rect x="1.6" y="4.4" width="12.8" height="10.4" rx="0.8" fill="url(#disc)"/><path d="M7 7.6V11.8L10 9.7Z" fill="#dff2fd"/></svg>
<svg class="a" style="left:224.60px;top:429.30px" width="16" height="16" viewBox="0 0 16 16"><rect x="0.6" y="1" width="14.8" height="13.6" rx="1" fill="#2f3a42"/><path d="M1.4 14V8.6L4 5.4L6.4 7.6L9.2 3.2L12 7.2L13.4 6.2L14.6 7.4V14Z" fill="#4fae74"/><path d="M1.4 14V11L4 9.4L6.4 10.8L9.2 8L12 10.2L14.6 9.6V14Z" fill="#86d3a2"/></svg>
<svg class="a" style="left:256.00px;top:427.20px" width="16" height="16" viewBox="0 0 16 16"><rect x="0.8" y="1" width="14.4" height="13.4" rx="1" fill="#24272b"/><rect x="3" y="5" width="10" height="1" fill="#e8e9ea"/><rect x="3" y="9.2" width="10" height="1" fill="#e8e9ea"/><rect x="9" y="4" width="2.2" height="3" fill="#fff"/><rect x="4.6" y="8.2" width="2.2" height="3" fill="#fff"/><path d="M11.6 5.5L13.6 5.5" stroke="#fff"/></svg>
<svg class="a" style="left:287.40px;top:428.60px" width="16" height="16" viewBox="0 0 16 16"><rect x="1.2" y="1.4" width="13.6" height="13" rx="1" fill="#2b2f33"/><path d="M6 5.2L9.2 8L6 10.8" fill="none" stroke="#d5d7d9" stroke-width="1.1"/></svg>
<svg class="a" style="left:601.40px;top:431.60px" width="10" height="10" viewBox="0 0 10 10"><path d="M5 1.3Q7.6 1.3 7.6 4.2V6L8.8 7.4H1.2L2.4 6V4.2Q2.4 1.3 5 1.3Z" fill="none" stroke="#fcfcfc" stroke-width="0.95"/><path d="M3.9 8.3Q5 9.6 6.1 8.3" fill="none" stroke="#fcfcfc" stroke-width="0.9"/><path d="M1.4 0.9L0.6 2.4M8.6 0.9L9.4 2.4" stroke="#fcfcfc" stroke-width="0.9"/></svg>
<svg class="a" style="left:616.30px;top:431.60px" width="10" height="10" viewBox="0 0 10 10"><g fill="#fcfcfc"><circle cx="2" cy="5.2" r="1"/><circle cx="4.6" cy="2" r="0.9"/><circle cx="4.6" cy="8.2" r="1.2"/><path d="M6 2.8L8.8 5.1L6 7.4L5.3 6.6L7.1 5.1L5.3 3.6Z"/></g><circle cx="7.6" cy="2" r="1" fill="#fcfcfc"/></svg>
<svg class="a" style="left:632.00px;top:431.60px" width="10" height="10" viewBox="0 0 10 10"><circle cx="5" cy="5" r="3.9" fill="none" stroke="#fcfcfc" stroke-width="0.9"/><path d="M5 2.4L7 5.2H5.8V7.4H4.2V5.2H3Z" fill="#e0504a"/><circle cx="7.8" cy="7.8" r="1.4" fill="#da4453"/></svg>
<svg class="a" style="left:647.90px;top:431.60px" width="10" height="10" viewBox="0 0 10 10"><rect x="1.4" y="1.8" width="7.2" height="7.4" rx="0.6" fill="none" stroke="#fcfcfc" stroke-width="0.9"/><rect x="3" y="0.8" width="4" height="2" fill="#fcfcfc"/><path d="M3 5H7M3 6.8H6" stroke="#fcfcfc" stroke-width="0.7"/></svg>
<svg class="a" style="left:663.00px;top:431.60px" width="10" height="10" viewBox="0 0 10 10"><path d="M1 3.8H2.8L5.2 1.6V8.4L2.8 6.2H1Z" fill="#fcfcfc"/><path d="M6.4 3.2Q7.4 5 6.4 6.8M7.6 2Q9.4 5 7.6 8" fill="none" stroke="#fcfcfc" stroke-width="0.7"/></svg>
<svg class="a" style="left:679.00px;top:431.60px" width="10" height="10" viewBox="0 0 10 10"><circle cx="5" cy="5" r="1.9" fill="#fcfcfc"/><path d="M5 0.6V2.2M5 7.8V9.4M0.6 5H2.2M7.8 5H9.4M1.9 1.9L3 3M7 7L8.1 8.1M8.1 1.9L7 3M3 7L1.9 8.1" stroke="#fcfcfc" stroke-width="0.7"/></svg>
<svg class="a" style="left:694.60px;top:431.60px" width="10" height="10" viewBox="0 0 10 10"><path d="M0.8 3.8Q5 0 9.2 3.8M2.2 5.4Q5 3 7.8 5.4M3.6 7Q5 5.8 6.4 7" fill="none" stroke="#fcfcfc" stroke-width="0.85"/><circle cx="5" cy="8.4" r="0.8" fill="#fcfcfc"/></svg>
<svg class="a" style="left:709.80px;top:431.60px" width="10" height="10" viewBox="0 0 10 10"><rect x="0.6" y="2.8" width="8" height="4.6" rx="0.5" fill="none" stroke="#fcfcfc" stroke-width="0.8"/><rect x="1.5" y="3.7" width="5" height="2.8" fill="#fcfcfc"/><rect x="8.8" y="4" width="0.9" height="2.2" fill="#fcfcfc"/></svg>
<svg class="a" style="left:725.60px;top:431.60px" width="10" height="10" viewBox="0 0 10 10"><path d="M0.9000000000000004 6.85L5 2.75L9.1 6.85" fill="none" stroke="#e4e5e6" stroke-width="0.85"/></svg>
<span class="t" style="left:741.35px;top:428.00px;font-size:14px;line-height:18px;color:#fcfcfc;letter-spacing:-0.534px;-webkit-text-stroke:0;">14:29</span>
<div class="a" style="left:781.3px;top:430.2px;width:12.5px;height:12.1px;background:transparent;border:1px solid #eceded;border-bottom-width:1.6px;box-sizing:border-box;border-radius:1px"></div>
</div></body></html>
